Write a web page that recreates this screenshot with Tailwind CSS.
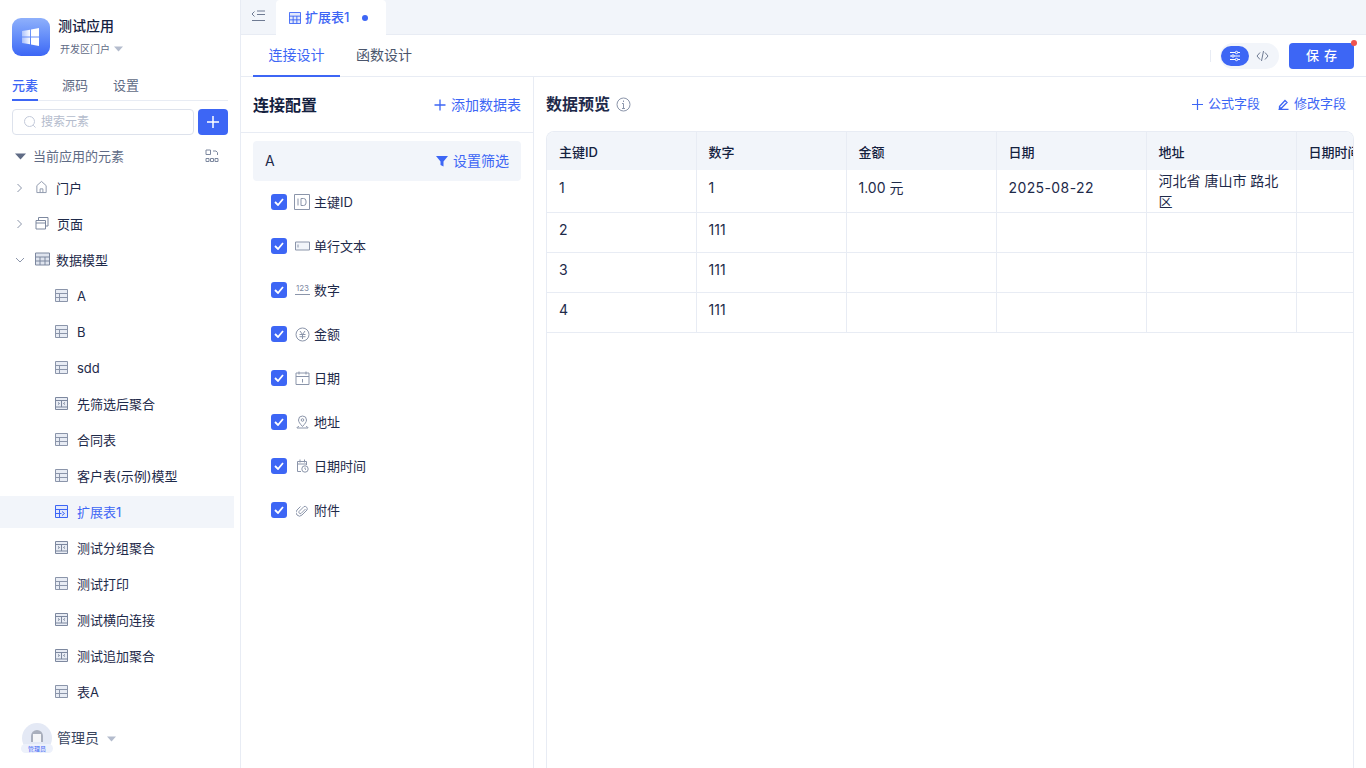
<!DOCTYPE html>
<html lang="zh-CN">
<head>
<meta charset="UTF-8">
<title>扩展表1</title>
<script src="https://cdn.jsdelivr.net/npm/@tailwindcss/browser@4"></script>
</head>
<body class="w-[1366px] h-[768px] overflow-hidden bg-white text-[13px] text-[#1e2a4a] font-['Inter','Noto_Sans_CJK_SC',sans-serif] flex">

<!-- sidebar -->
<aside class="w-[241px] h-full shrink-0 border-r border-[#e8ecf4] flex flex-col">
  <div class="flex pl-3 pt-[18px] gap-2 h-[76px]">
    <div class="w-[38px] h-[38px] rounded-[9px] bg-gradient-to-b from-[#8fb0fb] to-[#3d66f5] flex items-center justify-center">
      <svg width="20" height="20" viewBox="0 0 20 20">
        <defs><linearGradient id="win" x1="0" x2="1" y1="0" y2="0"><stop offset="0" stop-color="#fff" stop-opacity=".45"/><stop offset=".5" stop-color="#fff"/></linearGradient></defs>
        <path fill="url(#win)" d="M1 4l8-1.300v6.700H1zM10 2.500L18 1v8.400h-8zM1 10.500h8v6.800l-8-1.300zM10 10.500h8V19l-8-1.500z"/>
      </svg>
    </div>
    <div>
      <div class="text-sm font-medium leading-4 text-[#14213f]">测试应用</div>
      <div class="flex items-center gap-1 ml-0.5 mt-[9px] text-[10px] leading-3 text-[#5f6b85]">开发区门户
        <svg width="9" height="6" viewBox="0 0 9 6" fill="#b4bccd"><path d="M0 .5h9L4.500 5.500z"/></svg>
      </div>
    </div>
  </div>
  <div class="mx-3 w-[216px] h-[25px] flex border-b border-[#e8ecf4] text-[13px] leading-[18px] text-[#5f6b85]">
    <div class="h-[25px] border-b-2 border-[#3d66f5] text-[#3d66f5] font-medium">元素</div>
    <div class="ml-6">源码</div>
    <div class="ml-[25px]">设置</div>
  </div>
  <div class="mx-3 mt-2 flex gap-1 w-[216px] h-[26px]">
    <div class="w-[182px] rounded border border-[#dde2ec] flex items-center pl-[10px] gap-1 text-xs text-[#b4bccd]">
      <svg width="14" height="14" viewBox="0 0 14 14" fill="none" stroke="#c3cada" stroke-width="1"><circle cx="6.500" cy="6.500" r="5"/><path d="M10.200 10.200l2.300 2.300"/></svg>
      搜索元素
    </div>
    <div class="w-[30px] rounded bg-[#3d66f5] flex items-center justify-center">
      <svg width="12" height="12" viewBox="0 0 12 12" stroke="#fff" stroke-width="1.500"><path d="M6 0v12M0 6h12"/></svg>
    </div>
  </div>
  <div class="h-[26px] mt-[9px] pl-[15px] pr-[15px] w-[234px] flex items-center text-[13px] text-[#5f6b85]">
    <svg width="11" height="7" viewBox="0 0 11 7" fill="#5f6b85" class="mr-[7px] -mt-0.5"><path d="M0 .5h11L5.500 6.500z"/></svg>
    当前应用的元素
    <svg width="14" height="14" viewBox="0 0 14 14" fill="none" stroke="#7d889f" class="ml-auto -mt-0.5"><path d="M1 1h4.500v4.500H1zM8 2h3l1.500 1.500V6M1 9.500h3v3H1zM5.500 9.500h3v3h-3zM10 9.500h3v3h-3z" stroke-width="1"/></svg>
  </div>

  <div class="w-[234px] flex flex-col">
    <div class="h-9 flex items-center pl-4">
      <svg width="7" height="10" viewBox="0 0 7 10" fill="none" stroke="#8b95aa" class="mr-[12px]"><path d="M1.500 1l4 4-4 4"/></svg>
      <svg width="13" height="14" viewBox="0 0 14 14" fill="none" stroke="#8b95aa" class="mr-[8px] ml-0 -mt-0.5"><path d="M2 13V5.500L7 1l5 4.500V13zM5.500 13V9h3v4"/></svg>
      <span class="mt-0.5">门户</span>
    </div>
    <div class="h-9 flex items-center pl-4">
      <svg width="7" height="10" viewBox="0 0 7 10" fill="none" stroke="#8b95aa" class="mr-[11px]"><path d="M1.500 1l4 4-4 4"/></svg>
      <svg width="14" height="14" viewBox="0 0 14 14" fill="none" stroke="#7d889f" class="mr-[8px] ml-px -mt-0.5"><path d="M1 4.500h9.500V13H1zM1 7h9.500M3.500 4.500V1.500H13V10h-2.500"/></svg>
      <span class="mt-0.5">页面</span>
    </div>
    <div class="h-9 flex items-center pl-[15px]">
      <svg width="10" height="7" viewBox="0 0 10 7" fill="none" stroke="#8b95aa" class="mr-[10px]"><path d="M1 1l4 4 4-4"/></svg>
      <svg width="15" height="14" viewBox="0 0 15 14" fill="#dfe4ee" stroke="#7d889f" class="mr-[6px] -mt-0.5"><path d="M.5 1h14v12H.5zM.5 5h14M.5 9h14M5 5v8M10 5v8"/></svg>
      <span class="mt-0.5">数据模型</span>
    </div>

    <div class="h-9 flex items-center pl-[55px] gap-[9px]"><svg width="13" height="13" viewBox="0 0 13 13" fill="#e8ecf4" stroke="#8b95aa" class="-mt-0.5"><path d="M.5.500h12v12H.5zM.5 4.500h12M.5 8.500h12M4.500 4.500v8"/></svg><span class="mt-0.5">A</span></div>
    <div class="h-9 flex items-center pl-[55px] gap-[9px]"><svg width="13" height="13" viewBox="0 0 13 13" fill="#e8ecf4" stroke="#8b95aa" class="-mt-0.5"><path d="M.5.500h12v12H.5zM.5 4.500h12M.5 8.500h12M4.500 4.500v8"/></svg><span class="mt-0.5">B</span></div>
    <div class="h-9 flex items-center pl-[55px] gap-[9px]"><svg width="13" height="13" viewBox="0 0 13 13" fill="#e8ecf4" stroke="#8b95aa" class="-mt-0.5"><path d="M.5.500h12v12H.5zM.5 4.500h12M.5 8.500h12M4.500 4.500v8"/></svg><span class="mt-0.5">sdd</span></div>
    <div class="h-9 flex items-center pl-[55px] gap-[9px]"><svg width="13" height="13" viewBox="0 0 13 13" fill="#e8ecf4" stroke="#7d889f" class="-mt-0.5"><path d="M.5.500h12v12H.5zM.5 3.500h12M.5 10h12M6.500 3.500V10M3 5.500l1.500 1-1.500 1M10 5.500l-1.500 1 1.500 1"/></svg><span class="mt-0.5">先筛选后聚合</span></div>
    <div class="h-9 flex items-center pl-[55px] gap-[9px]"><svg width="13" height="13" viewBox="0 0 13 13" fill="#e8ecf4" stroke="#8b95aa" class="-mt-0.5"><path d="M.5.500h12v12H.5zM.5 4.500h12M.5 8.500h12M4.500 4.500v8"/></svg><span class="mt-0.5">合同表</span></div>
    <div class="h-9 flex items-center pl-[55px] gap-[9px]"><svg width="13" height="13" viewBox="0 0 13 13" fill="#e8ecf4" stroke="#8b95aa" class="-mt-0.5"><path d="M.5.500h12v12H.5zM.5 4.500h12M.5 8.500h12M4.500 4.500v8"/></svg><span class="mt-0.5">客户表(示例)模型</span></div>
    <div class="h-8 my-0.5 flex items-center pl-[55px] gap-[9px] bg-[#f2f5fa] text-[#3d66f5]"><svg width="13" height="13" viewBox="0 0 13 13" fill="#e3e9fb" stroke="#3d66f5" class="-mt-0.5"><path d="M.5.500h12v12H.5zM.5 4.500h12M.5 8.500h6M4.500 4.500v8M7 6.500l2.500 2-2.500 2"/></svg><span class="mt-0.5">扩展表1</span></div>
    <div class="h-9 flex items-center pl-[55px] gap-[9px]"><svg width="13" height="13" viewBox="0 0 13 13" fill="#e8ecf4" stroke="#7d889f" class="-mt-0.5"><path d="M.5.500h12v12H.5zM.5 3.500h12M.5 10h12M6.500 3.500V10M3 5.500l1.500 1-1.500 1M10 5.500l-1.500 1 1.500 1"/></svg><span class="mt-0.5">测试分组聚合</span></div>
    <div class="h-9 flex items-center pl-[55px] gap-[9px]"><svg width="13" height="13" viewBox="0 0 13 13" fill="#e8ecf4" stroke="#8b95aa" class="-mt-0.5"><path d="M.5.500h12v12H.5zM.5 4.500h12M.5 8.500h12M4.500 4.500v8"/></svg><span class="mt-0.5">测试打印</span></div>
    <div class="h-9 flex items-center pl-[55px] gap-[9px]"><svg width="13" height="13" viewBox="0 0 13 13" fill="#e8ecf4" stroke="#7d889f" class="-mt-0.5"><path d="M.5.500h12v12H.5zM.5 3.500h12M.5 10h12M6.500 3.500V10M3 5.500l1.500 1-1.500 1M10 5.500l-1.500 1 1.500 1"/></svg><span class="mt-0.5">测试横向连接</span></div>
    <div class="h-9 flex items-center pl-[55px] gap-[9px]"><svg width="13" height="13" viewBox="0 0 13 13" fill="#e8ecf4" stroke="#7d889f" class="-mt-0.5"><path d="M.5.500h12v12H.5zM.5 3.500h12M.5 10h12M6.500 3.500V10M3 5.500l1.500 1-1.500 1M10 5.500l-1.500 1 1.500 1"/></svg><span class="mt-0.5">测试追加聚合</span></div>
    <div class="h-9 flex items-center pl-[55px] gap-[9px]"><svg width="13" height="13" viewBox="0 0 13 13" fill="#e8ecf4" stroke="#8b95aa" class="-mt-0.5"><path d="M.5.500h12v12H.5zM.5 4.500h12M.5 8.500h12M4.500 4.500v8"/></svg><span class="mt-0.5">表A</span></div>
  </div>

  <div class="mt-[13px] ml-[22px] flex items-center">
    <div class="relative w-[30px] h-[30px] rounded-full bg-[#e4e9f5]">
      <div class="absolute left-[9px] top-[7px] w-[12px] h-[12px] rounded-t-full bg-[#a9afbd]"></div>
      <div class="absolute left-[11px] top-[11px] w-[8px] h-[8px] bg-[#f4f5f8]"></div>
      <div class="absolute -left-px bottom-0 w-[32px] h-[9px] bg-[#edf1fb] rounded-md text-[6px] leading-[9px] text-center text-[#3d66f5]">管理员</div>
    </div>
    <span class="ml-[5px] text-sm text-[#3a465f]">管理员</span>
    <svg width="9" height="6" viewBox="0 0 9 6" fill="#b4bccd" class="ml-[8px] mt-0.5"><path d="M0 .5h9L4.500 5.500z"/></svg>
  </div>
</aside>

<!-- main -->
<main class="flex-1 min-w-0 h-full flex flex-col">
  <div class="h-[35px] shrink-0 bg-[#f2f5fa] border-b border-[#e8ecf4] flex">
    <div class="w-[35px] flex items-center justify-center pb-[2px] pr-px">
      <svg width="14" height="12" viewBox="0 0 14 12" fill="none" stroke="#6f7b93"><path d="M3.500 1.500L1 4l2.500 2.500M6 1h8M6 4.500h8M1 10.500h13" /></svg>
    </div>
    <div class="w-[110px] h-[35px] rounded-t bg-white flex items-center pl-[13px] text-[13px] font-medium text-[#3d66f5]">
      <svg width="12" height="12" viewBox="0 0 13 13" fill="#e3e9fb" stroke="#3d66f5" class="mr-[4px]"><path d="M.5.500h12v12H.5zM.5 4.500h12M.5 8.500h12M4.500 4.500v8M8.500 4.500v8"/></svg>
      扩展表1
      <span class="ml-[13px] w-[6px] h-[6px] rounded-full bg-[#3d66f5]"></span>
    </div>
  </div>

  <div class="h-[42px] shrink-0 border-b border-[#e8ecf4] flex items-stretch pl-3 pr-3">
    <div class="w-[87px] h-[42px] border-b-2 border-[#3d66f5] text-[#3d66f5] text-sm flex items-center justify-center">连接设计</div>
    <div class="ml-4 text-sm text-[#4a556c] flex items-center h-[40px]">函数设计</div>
    <div class="ml-auto flex items-center">
      <div class="w-px h-[12px] bg-[#e8ecf4] mr-[9px]"></div>
      <div class="w-[59px] h-[26px] rounded-full bg-[#f2f5fa] flex items-center">
        <div class="w-[28px] h-[20px] ml-px rounded-full bg-[#3d66f5] flex items-center justify-center">
          <svg width="12" height="12" viewBox="0 0 12 12" fill="none" stroke="#fff"><path d="M1 2.500h10M1 6h10M1 9.500h10"/><circle cx="7.500" cy="2.500" r="1.200" fill="#3d66f5"/><circle cx="4" cy="6" r="1.200" fill="#3d66f5"/><circle cx="7.500" cy="9.500" r="1.200" fill="#3d66f5"/></svg>
        </div>
        <svg width="13" height="12" viewBox="0 0 13 12" fill="none" stroke="#6f7b93" class="ml-[7px]"><path d="M4 2.500L1 6l3 3.500M9 2.500L12 6 9 9.500M7.500 1l-2 10"/></svg>
      </div>
      <div class="relative ml-[10px] w-[65px] h-[26px] rounded bg-[#3d66f5] text-white text-[13px] font-medium tracking-[5px] pl-[5px] flex items-center justify-center">保存
        <span class="absolute -top-[3px] -right-[3px] w-[6px] h-[6px] rounded-full bg-[#ef5350]"></span>
      </div>
    </div>
  </div>

  <div class="flex-1 min-h-0 flex">
    <!-- connection config -->
    <section class="w-[293px] shrink-0 border-r border-[#e8ecf4]">
      <div class="h-[56px] border-b border-[#e8ecf4] pl-3 pr-3 flex items-center">
        <span class="text-base font-semibold text-[#14213f]">连接配置</span>
        <span class="ml-auto flex items-center gap-[5px] text-sm text-[#3d66f5]">
          <svg width="12" height="12" viewBox="0 0 12 12" stroke="#3d66f5" stroke-width="1.300"><path d="M6 .5v11M.5 6h11"/></svg>添加数据表
        </span>
      </div>
      <div class="mx-3 mt-2 h-10 rounded bg-[#f2f5fa] flex items-center pl-3 pr-3 text-sm">
        A
        <span class="ml-auto flex items-center gap-[5px] text-[#3d66f5] text-sm">
          <svg width="12" height="12" viewBox="0 0 12 12" fill="#3d66f5"><path d="M0 1h12L7.500 6.500V11.500l-3-1.500V6.500z"/></svg>设置筛选
        </span>
      </div>
      <div class="pl-[30px]">
        <div class="h-11 flex items-center"><span class="w-4 h-4 -mt-0.5 rounded-[3px] bg-[#3d66f5] flex items-center justify-center"><svg width="10" height="8" viewBox="0 0 10 8" fill="none" stroke="#fff" stroke-width="1.800"><path d="M1 4l3 3 5-6"/></svg></span><svg width="16" height="16" viewBox="0 0 16 16" fill="none" stroke="#8b95aa" class="ml-[7px] -mt-0.5"><path d="M.5.500h15v15H.5zM4 4.500v7M7 4.500v7h2.500a2.500 2.500 0 0 0 2.500-2.500V7a2.500 2.500 0 0 0-2.500-2.500z"/></svg><span class="ml-1">主键ID</span></div>
        <div class="h-11 flex items-center"><span class="w-4 h-4 -mt-0.5 rounded-[3px] bg-[#3d66f5] flex items-center justify-center"><svg width="10" height="8" viewBox="0 0 10 8" fill="none" stroke="#fff" stroke-width="1.800"><path d="M1 4l3 3 5-6"/></svg></span><svg width="15" height="10" viewBox="0 0 15 10" fill="#f2f5fa" stroke="#8b95aa" class="ml-[8px] -mt-0.5"><path d="M.5 1h14v8H.5zM3 3.500v3"/></svg><span class="ml-1">单行文本</span></div>
        <div class="h-11 flex items-center"><span class="w-4 h-4 -mt-0.5 rounded-[3px] bg-[#3d66f5] flex items-center justify-center"><svg width="10" height="8" viewBox="0 0 10 8" fill="none" stroke="#fff" stroke-width="1.800"><path d="M1 4l3 3 5-6"/></svg></span><span class="w-[15px] ml-[8px] -mt-1 border-b border-[#8b95aa] text-[8px] leading-[9px] pb-px text-center text-[#7d889f]">123</span><span class="ml-1">数字</span></div>
        <div class="h-11 flex items-center"><span class="w-4 h-4 -mt-0.5 rounded-[3px] bg-[#3d66f5] flex items-center justify-center"><svg width="10" height="8" viewBox="0 0 10 8" fill="none" stroke="#fff" stroke-width="1.800"><path d="M1 4l3 3 5-6"/></svg></span><svg width="15" height="15" viewBox="0 0 15 15" fill="none" stroke="#8b95aa" class="ml-[8px] -mt-0.5"><circle cx="7.500" cy="7.500" r="6.500"/><path d="M5 4l2.500 3.500L10 4M4.500 7.500h6M4.500 9.700h6M7.500 7.500V12"/></svg><span class="ml-1">金额</span></div>
        <div class="h-11 flex items-center"><span class="w-4 h-4 -mt-0.5 rounded-[3px] bg-[#3d66f5] flex items-center justify-center"><svg width="10" height="8" viewBox="0 0 10 8" fill="none" stroke="#fff" stroke-width="1.800"><path d="M1 4l3 3 5-6"/></svg></span><svg width="15" height="14" viewBox="0 0 15 14" fill="none" stroke="#8b95aa" class="ml-[8px] -mt-0.5"><path d="M1 2h13v11.500H1zM1 5.500h13M4 .5v3M11 .5v3M7.500 8v3.500"/></svg><span class="ml-1">日期</span></div>
        <div class="h-11 flex items-center"><span class="w-4 h-4 -mt-0.5 rounded-[3px] bg-[#3d66f5] flex items-center justify-center"><svg width="10" height="8" viewBox="0 0 10 8" fill="none" stroke="#fff" stroke-width="1.800"><path d="M1 4l3 3 5-6"/></svg></span><svg width="13" height="14" viewBox="0 0 13 14" fill="none" stroke="#8b95aa" class="ml-[9px] -mt-0.5"><path d="M6.500 11.500C4 8.800 2.500 6.800 2.500 5a4 4 0 0 1 8 0c0 1.800-1.500 3.800-4 6.500zM3 11.500c-1.500.3-2 .8-2 1.500h11c0-.7-.5-1.200-2-1.500"/><circle cx="6.500" cy="5" r="1.300"/></svg><span class="ml-[5px]">地址</span></div>
        <div class="h-11 flex items-center"><span class="w-4 h-4 -mt-0.5 rounded-[3px] bg-[#3d66f5] flex items-center justify-center"><svg width="10" height="8" viewBox="0 0 10 8" fill="none" stroke="#fff" stroke-width="1.800"><path d="M1 4l3 3 5-6"/></svg></span><svg width="13" height="14" viewBox="0 0 13 14" fill="none" stroke="#8b95aa" class="ml-[9px] -mt-0.5"><path d="M5 12.500H1.500v-10h9V6M1.500 5h9M4 .5v3M8.500.5v3"/><circle cx="9" cy="10" r="3.200"/><path d="M9 8.500V10l1 .7"/></svg><span class="ml-[5px]">日期时间</span></div>
        <div class="h-11 flex items-center"><span class="w-4 h-4 -mt-0.5 rounded-[3px] bg-[#3d66f5] flex items-center justify-center"><svg width="10" height="8" viewBox="0 0 10 8" fill="none" stroke="#fff" stroke-width="1.800"><path d="M1 4l3 3 5-6"/></svg></span><svg width="12" height="13" viewBox="0 0 12 13" fill="none" stroke="#8b95aa" class="ml-[9px] -mt-0.5"><path d="M9.500 5L5 9.500a1.500 1.500 0 0 1-2-2L8 2.500a2.500 2.500 0 0 1 3 3.500L6 11a3.500 3.500 0 0 1-5-5l3.500-3.500"/></svg><span class="ml-[6px]">附件</span></div>
      </div>
    </section>

    <!-- preview -->
    <section class="flex-1 min-w-0 pl-3 pr-3 flex flex-col">
      <div class="h-[54px] shrink-0 flex items-center">
        <span class="text-base font-semibold text-[#1e2a4a]">数据预览</span>
        <svg width="15" height="15" viewBox="0 0 15 15" fill="none" stroke="#8b95aa" class="ml-[6px]"><circle cx="7.500" cy="7.500" r="6.500"/><path d="M7.500 6.500v5M7.500 3.500v1.500M6 6.500h1.500M6 11.500h3"/></svg>
        <span class="ml-auto flex items-center gap-[5px] text-[13px] text-[#3d66f5]">
          <svg width="11" height="11" viewBox="0 0 11 11" stroke="#3d66f5" stroke-width="1.200"><path d="M5.500 0v11M0 5.500h11"/></svg>公式字段
        </span>
        <span class="ml-[18px] mr-2 flex items-center gap-[5px] text-[13px] text-[#3d66f5]">
          <svg width="11" height="11" viewBox="0 0 10 11" fill="none" stroke="#3d66f5" stroke-width="1.300"><path d="M1 7.500L6.500 1.500 8.500 3.500 3 9H1zM0 10.500h10"/></svg>修改字段
        </span>
      </div>
      <div class="flex-1 min-h-0 overflow-hidden rounded-t-lg border-x border-t border-[#e8ecf4]">
        <table class="table-fixed w-[899px] border-collapse text-sm">
          <thead>
            <tr class="h-[38px] bg-[#f2f5fa] text-[13px] text-[#14213f] text-left">
              <th class="w-[149px] pl-3 pt-[3px] font-medium border-r border-[#e8ecf4]">主键ID</th>
              <th class="w-[150px] pl-3 pt-[3px] font-medium border-r border-[#e8ecf4]">数字</th>
              <th class="w-[150px] pl-3 pt-[3px] font-medium border-r border-[#e8ecf4]">金额</th>
              <th class="w-[150px] pl-3 pt-[3px] font-medium border-r border-[#e8ecf4]">日期</th>
              <th class="w-[150px] pl-3 pt-[3px] font-medium border-r border-[#e8ecf4]">地址</th>
              <th class="w-[150px] pl-3 pt-[3px] font-medium whitespace-nowrap">日期时间</th>
            </tr>
          </thead>
          <tbody>
            <tr class="h-[42px] border-b border-[#e8ecf4]">
              <td class="pl-3 pb-[6px] border-r border-[#e8ecf4]">1</td>
              <td class="pl-3 pb-[6px] border-r border-[#e8ecf4]">1</td>
              <td class="pl-3 pb-[6px] border-r border-[#e8ecf4]">1.00 元</td>
              <td class="pl-3 pb-[6px] tracking-[0.4px] border-r border-[#e8ecf4]">2025-08-22</td>
              <td class="px-3 leading-[21px] border-r border-[#e8ecf4]">河北省 唐山市 路北区</td>
              <td></td>
            </tr>
            <tr class="h-10 border-b border-[#e8ecf4]">
              <td class="pl-3 pb-[5px] border-r border-[#e8ecf4]">2</td>
              <td class="pl-3 pb-[5px] border-r border-[#e8ecf4]">111</td>
              <td class="border-r border-[#e8ecf4]"></td>
              <td class="border-r border-[#e8ecf4]"></td>
              <td class="border-r border-[#e8ecf4]"></td>
              <td></td>
            </tr>
            <tr class="h-10 border-b border-[#e8ecf4]">
              <td class="pl-3 pb-[5px] border-r border-[#e8ecf4]">3</td>
              <td class="pl-3 pb-[5px] border-r border-[#e8ecf4]">111</td>
              <td class="border-r border-[#e8ecf4]"></td>
              <td class="border-r border-[#e8ecf4]"></td>
              <td class="border-r border-[#e8ecf4]"></td>
              <td></td>
            </tr>
            <tr class="h-10 border-b border-[#e8ecf4]">
              <td class="pl-3 pb-[5px] border-r border-[#e8ecf4]">4</td>
              <td class="pl-3 pb-[5px] border-r border-[#e8ecf4]">111</td>
              <td class="border-r border-[#e8ecf4]"></td>
              <td class="border-r border-[#e8ecf4]"></td>
              <td class="border-r border-[#e8ecf4]"></td>
              <td></td>
            </tr>
          </tbody>
        </table>
      </div>
    </section>
  </div>
</main>
</body>
</html>
